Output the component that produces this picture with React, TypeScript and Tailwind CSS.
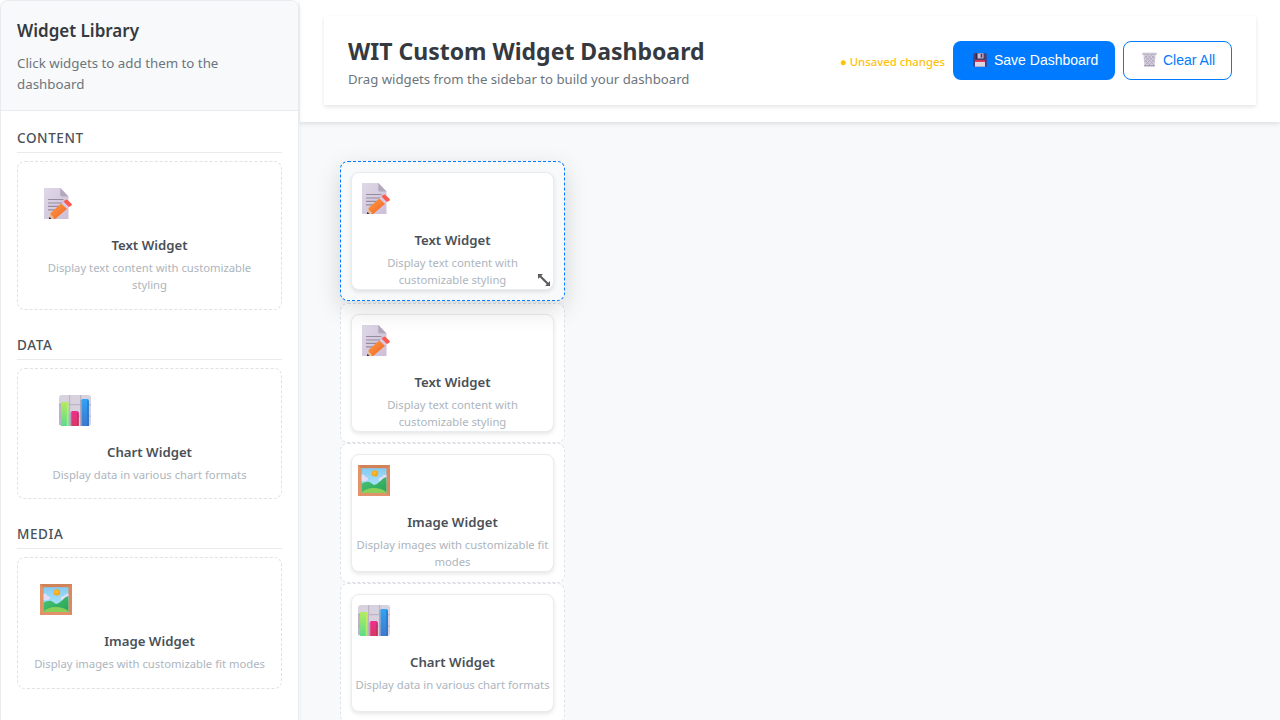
import type { ReactNode } from "react";

type Kind = "text" | "chart" | "image";

const WIDGETS: Record<Kind, { title: string; description: string }> = {
  text: { title: "Text Widget", description: "Display text content with customizable styling" },
  chart: { title: "Chart Widget", description: "Display data in various chart formats" },
  image: { title: "Image Widget", description: "Display images with customizable fit modes" },
};

const CATEGORIES: { name: string; kind: Kind; iconClass: string }[] = [
  { name: "CONTENT", kind: "text", iconClass: "ml-1.5" },
  { name: "DATA", kind: "chart", iconClass: "ml-[25px]" },
  { name: "MEDIA", kind: "image", iconClass: "ml-1.5" },
];

const PLACED: Kind[] = ["text", "text", "image", "chart"];

function MemoIcon() {
  return (
    <svg width="32" height="31" viewBox="0 0 32 31">
      <defs>
        <linearGradient id="paper" x1="0" y1="0" x2="1" y2="1">
          <stop offset="0" stopColor="#dfd8e8" />
          <stop offset="1" stopColor="#cdbfd6" />
        </linearGradient>
        <linearGradient id="pencil" x1="0" y1="0" x2="1" y2="1">
          <stop offset="0" stopColor="#ffa03c" />
          <stop offset="1" stopColor="#f0602c" />
        </linearGradient>
      </defs>
      <path d="M4 0H20.5L28.5 8.5V31H4Z" fill="url(#paper)" />
      <path d="M20.3 0V7Q20.3 8.5 21.8 8.5H28.5Z" fill="#b3a9bd" />
      <path d="M8 11.5H23.5M8 15H23.5M8 18.3H20M8 21.8H16.5" stroke="#968b9f" strokeWidth="1.2" />
      <path d="M11 24.3L8.8 31H13L16.6 28.5Z" fill="#e8bf9c" />
      <path d="M9.5 28.8L8.8 31H11.4Z" fill="#3c2b3a" />
      <path d="M10.6 25L22 14.8L27.4 20.4L15.2 31H13.8Q13.9 28.6 11.8 27.8Q10.2 27 10.6 25Z" fill="url(#pencil)" />
      <path d="M21.3 15.4L23.8 13.2L29.2 18.6L26.8 20.8Z" fill="#d8c9e4" />
      <path d="M23.5 13.4L25.3 11.9Q26.4 11.1 27.5 12L31.5 15.8Q32.2 17 31.3 17.8L28.9 19Z" fill="#fb5a4e" />
    </svg>
  );
}

function ChartIcon() {
  return (
    <svg width="32" height="31" viewBox="0 0 32 31">
      <defs>
        <linearGradient id="barA" x1="0" y1="0" x2="0" y2="1">
          <stop offset="0" stopColor="#b4ec5c" />
          <stop offset="1" stopColor="#5cdc8e" />
        </linearGradient>
        <linearGradient id="barB" x1="0" y1="0" x2="0" y2="1">
          <stop offset="0" stopColor="#f02e90" />
          <stop offset="1" stopColor="#d63a60" />
        </linearGradient>
        <linearGradient id="barC" x1="0" y1="0" x2="0" y2="1">
          <stop offset="0" stopColor="#2fa4f4" />
          <stop offset="1" stopColor="#3f78cc" />
        </linearGradient>
      </defs>
      <rect width="32" height="31" rx="3" fill="#d8d2df" />
      <path d="M0 9.7H32M0 21.2H32M10.6 0V31M21.6 0V31" stroke="#bdb4c6" strokeWidth="1.2" />
      <path d="M1 8.5V30M11.5 17.5V31M21.8 5V31" stroke="#b0a4ba" strokeWidth="1.3" />
      <path d="M2 31V8.2Q2 7 3.2 7H8.6L9.6 8.5V31Z" fill="url(#barA)" />
      <path d="M8.4 8V31" stroke="#d2ec68" strokeWidth="1.2" opacity=".7" />
      <path d="M12.2 31V17.2Q12.2 16 13.4 16H18.6L19.8 17.5V31Z" fill="url(#barB)" />
      <path d="M18.9 17.5V31" stroke="#b52f5c" strokeWidth="1.1" />
      <path d="M22.5 31V5.2Q22.5 4 23.7 4H29L30 5.5V31Z" fill="url(#barC)" />
      <path d="M29 5.5V31" stroke="#2c6fc4" strokeWidth="1.2" />
    </svg>
  );
}

function PictureIcon() {
  return (
    <svg width="32" height="31" viewBox="0 0 32 31">
      <defs>
        <linearGradient id="sky" x1="0" y1="0" x2="0" y2="1">
          <stop offset="0" stopColor="#84cbf2" />
          <stop offset="1" stopColor="#b5ecfc" />
        </linearGradient>
        <linearGradient id="hill" x1="0" y1="0" x2="1" y2="1">
          <stop offset="0" stopColor="#4cc476" />
          <stop offset="1" stopColor="#27a457" />
        </linearGradient>
      </defs>
      <rect width="32" height="31" fill="#da8a5e" />
      <path d="M0 0H32L28.5 3.2H3.5Z" fill="#d18257" />
      <path d="M0 31H32L28.5 28H3.5Z" fill="#e2926a" />
      <path d="M0 0L3.5 3.2V28L0 31Z" fill="#e09468" />
      <rect x="3.6" y="3.2" width="24.8" height="24.8" fill="url(#sky)" />
      <path d="M3.6 9.5Q7 9.5 7.5 12Q10.2 12 10 14.3Q9.5 16 7 16H3.6Z" fill="#e3dcf8" />
      <path d="M28.4 9.5Q25 9.5 24 12Q20.5 12.2 20.5 15L22 17H28.4Z" fill="#e3dcf8" />
      <circle cx="17" cy="8.4" r="3.2" fill="#f6a81f" />
      <circle cx="16.4" cy="7.8" r="1.5" fill="#fbbd35" />
      <path d="M3.6 18.5Q9.5 15.3 13 18L16 20Q19.5 19 22.5 16Q25.5 12.5 28.4 12V28H3.6Z" fill="url(#hill)" />
      <path d="M3.6 27.5Q8 23.2 15.5 23Q23.5 23 28.4 27.2V28H3.6Z" fill="#88d05a" />
    </svg>
  );
}

function FloppyIcon() {
  return (
    <svg width="14" height="14" viewBox="0 0 14 14">
      <path d="M0.5 0.3H12.5L13.7 1.5V13.7H1.2L0.2 12.7Z" fill="#4f3c70" />
      <path d="M2.8 0.3H11V5.8H2.8Z" fill="#33264a" />
      <path d="M4.5 0.3H10.6V5.5H4.5Z" fill="#c9c0d6" />
      <rect x="7.7" y="1" width="1.6" height="3.6" fill="#453662" />
      <rect x="2" y="7.2" width="10" height="1.9" fill="#e93a55" />
      <rect x="2" y="9" width="10" height="4.7" fill="#ddd4e6" />
    </svg>
  );
}

function TrashIcon() {
  return (
    <svg width="15" height="15" viewBox="0 0 15 15">
      <path d="M1.3 2H13.7L12.6 14H2.4Z" fill="#d3ccda" />
      <path d="M3 4L12 13M6 3.5L12.5 10M9.5 3.5L13 7M2.8 8L8.5 13.5M12 4L3 13M9 3.5L2.5 10M5.5 3.5L2 7M12.2 8L6.5 13.5" stroke="#a99fb4" strokeWidth=".7" />
      <rect x=".4" y=".8" width="14.2" height="2" rx=".6" fill="#b5adc0" />
      <rect x="1.2" y="1.2" width="12.6" height=".7" fill="#d9d3df" />
      <rect x="2" y="13" width="11" height="1.5" rx=".5" fill="#aaa0b6" />
    </svg>
  );
}

function ResizeIcon() {
  return (
    <svg width="12" height="12" viewBox="0 0 12 12">
      <path d="M2 2L10 10" stroke="#5c5c5c" strokeWidth="2.1" />
      <path d="M0 0H5L0 5ZM12 12H7L12 7Z" fill="#5c5c5c" />
    </svg>
  );
}

const ICONS: Record<Kind, ReactNode> = {
  text: <MemoIcon />,
  chart: <ChartIcon />,
  image: <PictureIcon />,
};

function WidgetBody({ kind, iconClass }: { kind: Kind; iconClass: string }) {
  const { title, description } = WIDGETS[kind];
  return (
    <>
      <div className={`flex h-[57px] pt-2.5 ${iconClass}`}>{ICONS[kind]}</div>
      <div className="mb-1 text-center text-[13.2px] leading-[21px] font-semibold text-[#495057]">{title}</div>
      <p className="text-center text-[11.25px] leading-[16.8px] text-[#adb5bd]">{description}</p>
    </>
  );
}

function Sidebar() {
  return (
    <aside className="z-10 flex h-[740px] w-[299px] shrink-0 flex-col overflow-hidden rounded-lg border border-[#e9ecef] bg-white shadow-[0_2px_4px_rgba(0,0,0,0.1)]">
      <div className="border-b border-[#e9ecef] bg-[#f8f9fa] px-4 pt-4 pb-[15px]">
        <h3 className="mb-[9px] text-[17px] leading-[27px] font-semibold text-[#343a40]">Widget Library</h3>
        <p className="w-60 text-[13.3px] leading-[21px] text-[#6c757d]">Click widgets to add them to the dashboard</p>
      </div>
      <div className="flex flex-col gap-6 p-4">
        {CATEGORIES.map((c) => (
          <section key={c.name}>
            <h4 className="mb-2 border-b border-[#e9ecef] pt-px pb-[3px] text-[13.5px] leading-[21px] font-medium tracking-[0.6px] text-[#495057]">
              {c.name}
            </h4>
            <div className="rounded-lg border border-dashed border-[#dee2e6] bg-white px-4 pt-4 pb-[15px]">
              <WidgetBody kind={c.kind} iconClass={c.iconClass} />
            </div>
          </section>
        ))}
      </div>
    </aside>
  );
}

function Header() {
  return (
    <header className="h-[122px] shrink-0 bg-white px-6 pt-4 shadow-[0_2px_4px_rgba(0,0,0,0.1)]">
      <div className="flex h-[89px] items-center justify-between bg-white px-6 shadow-[0_2px_4px_rgba(0,0,0,0.1)]">
        <div className="pt-[5px]">
          <h1 className="text-[23px] leading-[30px] font-bold text-[#343a40]">WIT Custom Widget Dashboard</h1>
          <p className="mt-[3px] text-[13.18px] leading-[21px] text-[#6c757d]">Drag widgets from the sidebar to build your dashboard</p>
        </div>
        <div className="flex items-center gap-2">
          <span className="pt-0.5 text-[11.35px] leading-[18px] font-medium text-[#ffc107]">● Unsaved changes</span>
          <button className="flex h-[39px] w-[162px] items-center rounded-lg bg-[#007bff] pb-0.5 pl-5 font-['Liberation_Sans',sans-serif] text-sm text-white">
            <FloppyIcon />
            <span className="ml-[7px]">Save Dashboard</span>
          </button>
          <button className="flex h-[39px] w-[109px] items-center rounded-lg border border-[#007bff] bg-white pb-0.5 pl-[18px] font-['Liberation_Sans',sans-serif] text-sm text-[#007bff]">
            <TrashIcon />
            <span className="ml-1.5">Clear All</span>
          </button>
        </div>
      </div>
    </header>
  );
}

function PlacedWidget({ kind, selected }: { kind: Kind; selected: boolean }) {
  const frame = selected
    ? "z-10 -translate-y-0.5 border-[#007bff] bg-[#f8f9fb] shadow-[0_8px_24px_rgba(0,0,0,0.15)]"
    : "border-[#dee2e6] bg-white";
  return (
    <div className={`relative h-[140px] w-[225px] rounded-lg border border-dashed p-2.5 ${frame}`}>
      <div className="h-full overflow-hidden rounded-lg border border-[#e9ecef] bg-white shadow-[0_2px_4px_rgba(0,0,0,0.1)]">
        <WidgetBody kind={kind} iconClass="ml-1.5" />
      </div>
      {selected && (
        <div className="absolute right-3.5 bottom-3.5">
          <ResizeIcon />
        </div>
      )}
    </div>
  );
}

export default function App() {
  return (
    <div className="flex h-screen w-screen overflow-hidden bg-white font-['Noto_Sans',sans-serif]">
      <Sidebar />
      <main className="ml-px flex min-w-0 flex-1 flex-col bg-[#f8f9fb]">
        <Header />
        <div className="flex flex-col px-10 pt-[41px]">
          {PLACED.map((kind, i) => (
            <PlacedWidget key={i} kind={kind} selected={i === 0} />
          ))}
        </div>
      </main>
    </div>
  );
}
